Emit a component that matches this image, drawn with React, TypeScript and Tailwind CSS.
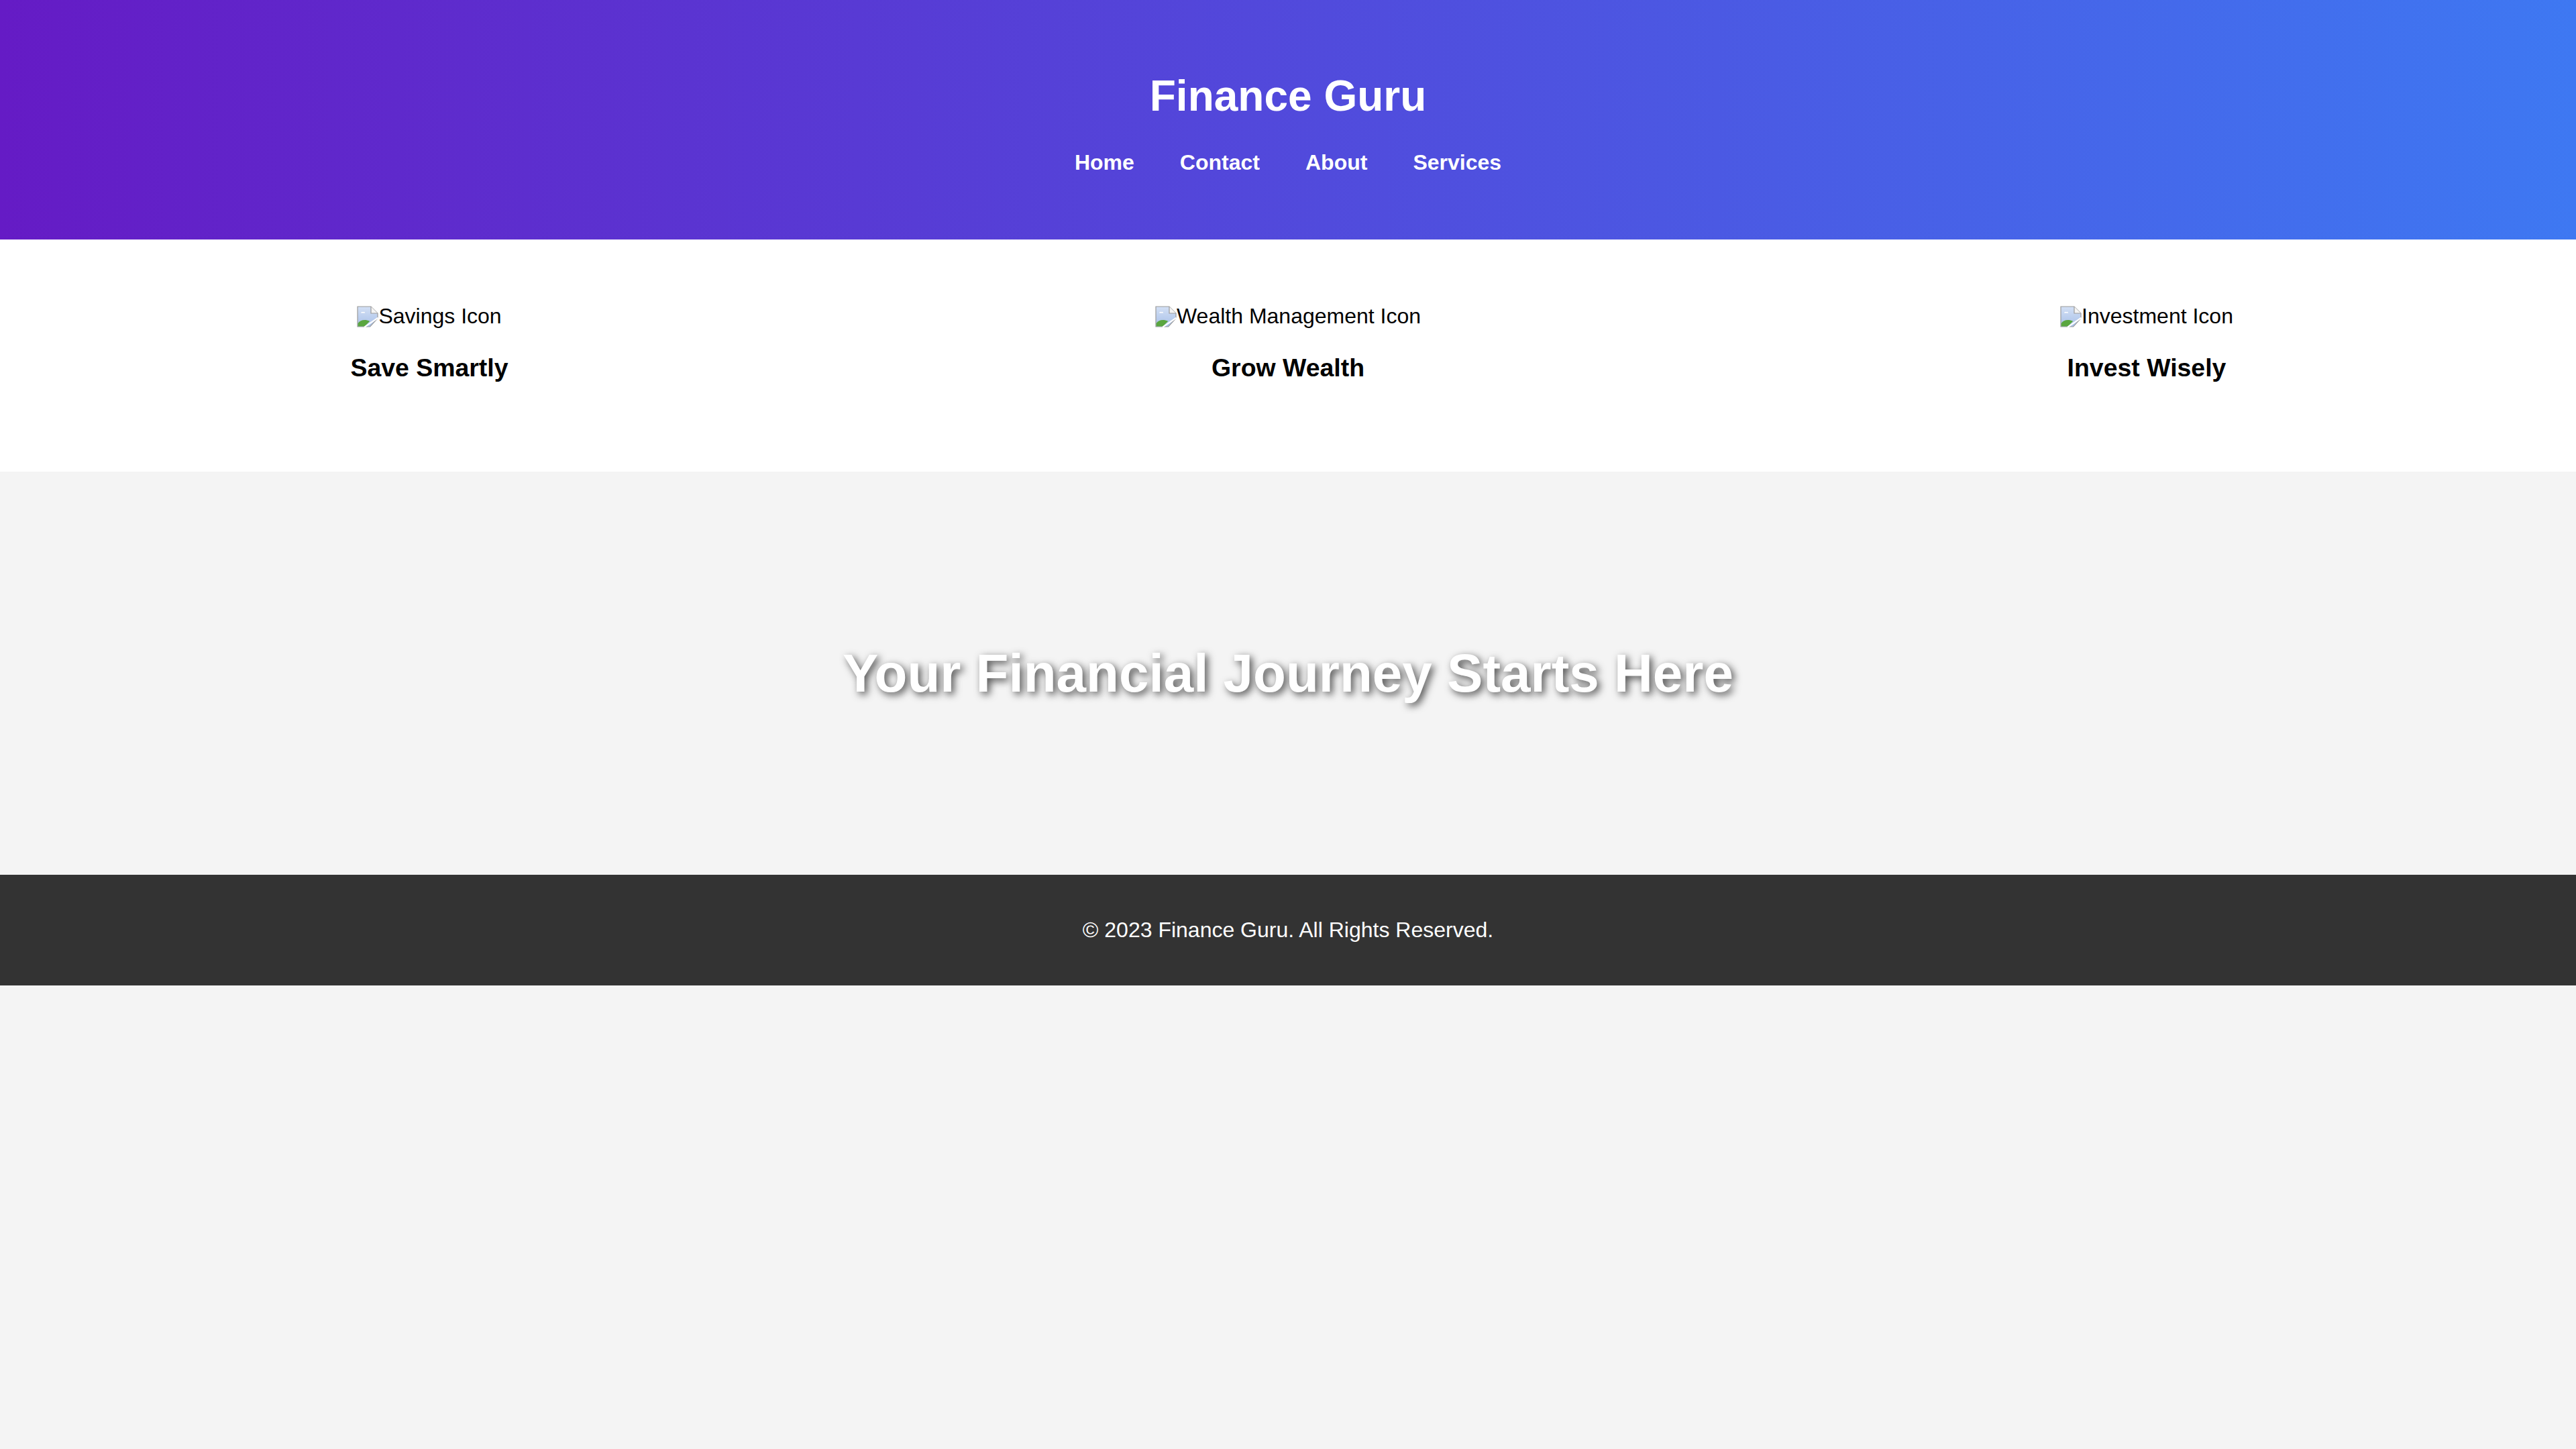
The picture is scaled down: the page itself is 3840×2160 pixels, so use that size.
import React from 'react';

const features = [
    { alt: 'Savings Icon', title: 'Save Smartly' },
    { alt: 'Wealth Management Icon', title: 'Grow Wealth' },
    { alt: 'Investment Icon', title: 'Invest Wisely' },
];

const navLinks = ['Home', 'Contact', 'About', 'Services'];

// what the browser shows for an image that did not load
const BrokenImage = () => (
    <svg width="32" height="32" viewBox="0 0 16 16" className="shrink-0">
        <defs>
            <linearGradient id="sky" x1="0" y1="0" x2="0" y2="1">
                <stop offset="0" stopColor="#d3e0f5" />
                <stop offset="1" stopColor="#a8c0e8" />
            </linearGradient>
        </defs>
        <path d="M0.5 0.5H10.5L15.5 5.5V9.2L9.8 15.5H0.5Z" fill="url(#sky)" stroke="#9a9a9a" strokeWidth="0.6" />
        <path d="M10.5 0.5V5.5H15.5" fill="#f4f4f4" stroke="#9a9a9a" strokeWidth="0.6" />
        <path d="M3 5.2a1 1 0 0 1 1.6-0.6a0.9 0.9 0 0 1 1.5 0.7H3Z" fill="#ffffff" />
        <path d="M0.8 15.2V13C2.5 10.5 6 9.8 9.6 11.4L5.8 15.2Z" fill="#5aa63f" />
        <path d="M5.6 15.8L15.8 8.8" stroke="#ffffff" strokeWidth="1.1" />
    </svg>
);

export default function App() {
    return (
        <div className="min-h-screen bg-[#f4f4f4] font-['Liberation_Sans',Arial,sans-serif] text-black">
            {/* Header */}
            <header className="bg-[linear-gradient(to_right,#651bc5,#3e78f2)] pt-[107px] pb-[97px] text-center text-white">
                <h1 className="text-[64px] font-bold leading-[73.6px]">Finance Guru</h1>
                <nav className="mt-[43px]">
                    <ul className="flex justify-center gap-[68px] text-[32px] font-bold leading-[36.8px]">
                        {navLinks.map((link) => (
                            <li key={link}>
                                <a href="#" className="text-white">{link}</a>
                            </li>
                        ))}
                    </ul>
                </nav>
            </header>

            {/* Features */}
            <section className="grid grid-cols-3 bg-white pt-[96px] pb-[133px] text-center">
                {features.map((f) => (
                    <div key={f.title} className="flex flex-col items-center">
                        <div className="flex items-center text-[32px] leading-[36.8px]">
                            <BrokenImage />
                            <span>{f.alt}</span>
                        </div>
                        <h3 className="mt-[37px] text-[37.44px] font-bold leading-[43px]">{f.title}</h3>
                    </div>
                ))}
            </section>

            {/* Hero */}
            <section className="flex h-[601px] items-center justify-center bg-[#f4f4f4]">
                <h2 className="text-[80px] font-bold leading-[92px] text-white [text-shadow:4px_4px_12px_rgba(0,0,0,0.7)]">
                    Your Financial Journey Starts Here
                </h2>
            </section>

            {/* Footer */}
            <footer className="bg-[#333333] py-[64px] text-center text-[32px] leading-[36.8px] text-white">
                <p>© 2023 Finance Guru. All Rights Reserved.</p>
            </footer>
        </div>
    );
}
